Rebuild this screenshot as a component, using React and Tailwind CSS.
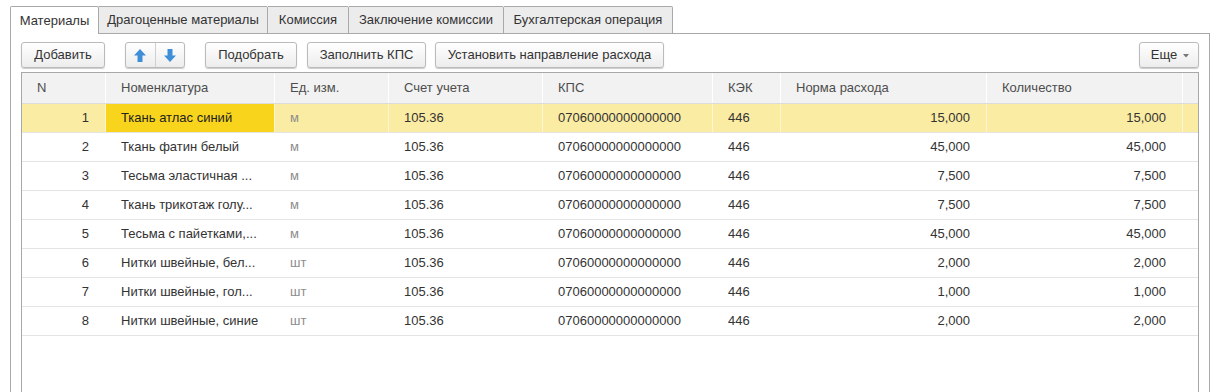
import React from 'react'

const tabs = [
  { label: 'Материалы', w: 'w-[89px]', active: true },
  { label: 'Драгоценные материалы', w: 'w-[169px]' },
  { label: 'Комиссия', w: 'w-[81px]' },
  { label: 'Заключение комиссии', w: 'w-[155px]' },
  { label: 'Бухгалтерская операция', w: 'w-[169px]' },
]

const columns = [
  { title: 'N', w: 'w-[84px]', align: 'right' },
  { title: 'Номенклатура', w: 'w-[169px]' },
  { title: 'Ед. изм.', w: 'w-[114px]', muted: true },
  { title: 'Счет учета', w: 'w-[154px]' },
  { title: 'КПС', w: 'w-[170px]' },
  { title: 'КЭК', w: 'w-[68px]' },
  { title: 'Норма расхода', w: 'w-[206px]', align: 'right' },
  { title: 'Количество', w: 'w-[196px]', align: 'right' },
]

const rows = [
  ['1', 'Ткань атлас синий', 'м', '105.36', '07060000000000000', '446', '15,000', '15,000'],
  ['2', 'Ткань фатин белый', 'м', '105.36', '07060000000000000', '446', '45,000', '45,000'],
  ['3', 'Тесьма эластичная ...', 'м', '105.36', '07060000000000000', '446', '7,500', '7,500'],
  ['4', 'Ткань трикотаж голу...', 'м', '105.36', '07060000000000000', '446', '7,500', '7,500'],
  ['5', 'Тесьма с пайетками,...', 'м', '105.36', '07060000000000000', '446', '45,000', '45,000'],
  ['6', 'Нитки швейные, бел...', 'шт', '105.36', '07060000000000000', '446', '2,000', '2,000'],
  ['7', 'Нитки швейные, гол...', 'шт', '105.36', '07060000000000000', '446', '1,000', '1,000'],
  ['8', 'Нитки швейные, синие', 'шт', '105.36', '07060000000000000', '446', '2,000', '2,000'],
]

function Button({ children, className = '' }) {
  return (
    <button
      className={`h-[26px] flex items-center justify-center rounded-[3px] border border-[#bababa] bg-gradient-to-b from-white to-[#ededed] shadow-[0_1px_1px_rgba(0,0,0,0.2)] text-[13px] text-[#333] ${className}`}
    >
      {children}
    </button>
  )
}

function Arrow({ down }) {
  return (
    <svg width="12" height="13" viewBox="0 0 12 13" className={down ? 'rotate-180' : ''}>
      <path d="M6 0 L12 6.5 H8.5 V13 H3.5 V6.5 H0 Z" fill="#3f8fd8" />
    </svg>
  )
}

export default function App() {
  return (
    <div className="w-[1221px] h-[392px] overflow-hidden bg-white pl-[10px] pt-[6px] font-['Liberation_Sans',Arial,sans-serif] text-[13px] text-[#333]">
      <div className="w-[1200px]">
        {/* Tabs */}
        <div className="flex h-[28px]">
          {tabs.map((t) =>
            t.active ? (
              <div
                key={t.label}
                className={`${t.w} flex items-center justify-center bg-white border border-b-0 border-[#a9a9a9] rounded-t-[2px]`}
              >
                {t.label}
              </div>
            ) : (
              <div
                key={t.label}
                className={`${t.w} flex items-center justify-center bg-[#ececec] border-t border-r border-b border-[#a9a9a9] rounded-tr-[2px]`}
              >
                {t.label}
              </div>
            )
          )}
          <div className="flex-1 border-b border-[#a9a9a9]" />
        </div>

        {/* Panel */}
        <div className="h-[400px] border-l border-r border-[#a9a9a9] px-[10px] pt-[8px]">
          <div className="flex items-center h-[26px]">
            <Button className="w-[84px]">Добавить</Button>
            <div className="ml-[20px] w-[60px] h-[26px] flex rounded-[3px] border border-[#bababa] bg-gradient-to-b from-white to-[#ededed] shadow-[0_1px_1px_rgba(0,0,0,0.2)]">
              <div className="flex-1 flex items-center justify-center border-r border-[#d0d0d0]">
                <Arrow />
              </div>
              <div className="flex-1 flex items-center justify-center">
                <Arrow down />
              </div>
            </div>
            <Button className="ml-[20px] w-[92px]">Подобрать</Button>
            <Button className="ml-[10px] w-[119px]">Заполнить КПС</Button>
            <Button className="ml-[9px] w-[229px]">Установить направление расхода</Button>
            <Button className="ml-auto w-[60px] gap-[6px] pl-[2px]">
              <span>Еще</span>
              <svg width="6" height="4" viewBox="0 0 6 4" className="mt-[1px]">
                <path d="M0 0 H6 L3 3.5 Z" fill="#777" />
              </svg>
            </Button>
          </div>

          {/* Table */}
          <div className="mt-[4px] h-[340px] border border-[#a8a8a8]">
            <div className="flex h-[31px] bg-[#f2f2f2] border-b border-[#dcdcdc] text-[#4d4d4d]">
              {columns.map((c) => (
                <div
                  key={c.title}
                  className={`${c.w} flex items-center pl-[15px] border-r border-white shrink-0`}
                >
                  {c.title}
                </div>
              ))}
              <div className="flex-1" />
            </div>
            {rows.map((r, i) => {
              const current = i === 0
              return (
                <div
                  key={r[0]}
                  className={`flex h-[29px] border-b border-[#e4e4e4] ${current ? 'bg-[#fbeca3]' : 'bg-white'}`}
                >
                  {r.map((v, j) => {
                    const c = columns[j]
                    const sel = current && j === 1
                    return (
                      <div
                        key={j}
                        className={`${c.w} shrink-0 flex items-center border-r ${current ? 'border-[#fdf6d4]' : 'border-white'} ${
                          c.align === 'right' ? 'justify-end pr-[16px]' : 'pl-[15px]'
                        } ${sel ? 'bg-[#f8d51c] text-[#222]' : ''} ${c.muted ? 'text-[#8c8c8c]' : ''} whitespace-nowrap overflow-hidden`}
                      >
                        {v}
                      </div>
                    )
                  })}
                  <div className="flex-1" />
                </div>
              )
            })}
          </div>
        </div>
      </div>
    </div>
  )
}
